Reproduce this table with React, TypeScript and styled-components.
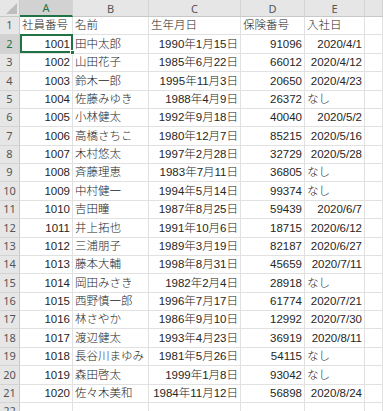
import React from "react";
import styled, { createGlobalStyle, css } from "styled-components";

const Global = createGlobalStyle`
  html, body { margin: 0; padding: 0; background: #ffffff; }
  body { overflow: hidden; }
`;

type Row = [string, string, string, string, string];

const rows: Row[] = [
  ["1001", "田中太郎", "1990年1月15日", "91096", "2020/4/1"],
  ["1002", "山田花子", "1985年6月22日", "66012", "2020/4/12"],
  ["1003", "鈴木一郎", "1995年11月3日", "20650", "2020/4/23"],
  ["1004", "佐藤みゆき", "1988年4月9日", "26372", "なし"],
  ["1005", "小林健太", "1992年9月18日", "40040", "2020/5/2"],
  ["1006", "高橋さちこ", "1980年12月7日", "85215", "2020/5/16"],
  ["1007", "木村悠太", "1997年2月28日", "32729", "2020/5/28"],
  ["1008", "斉藤理恵", "1983年7月11日", "36805", "なし"],
  ["1009", "中村健一", "1994年5月14日", "99374", "なし"],
  ["1010", "吉田瞳", "1987年8月25日", "59439", "2020/6/7"],
  ["1011", "井上拓也", "1991年10月6日", "18715", "2020/6/12"],
  ["1012", "三浦朋子", "1989年3月19日", "82187", "2020/6/27"],
  ["1013", "藤本大輔", "1998年8月31日", "45659", "2020/7/11"],
  ["1014", "岡田みさき", "1982年2月4日", "28918", "なし"],
  ["1015", "西野慎一郎", "1996年7月17日", "61774", "2020/7/21"],
  ["1016", "林さやか", "1986年9月10日", "12992", "2020/7/30"],
  ["1017", "渡辺健太", "1993年4月23日", "36919", "2020/8/11"],
  ["1018", "長谷川まゆみ", "1981年5月26日", "54115", "なし"],
  ["1019", "森田啓太", "1999年1月8日", "93042", "なし"],
  ["1020", "佐々木美和", "1984年11月12日", "56898", "2020/8/24"],
];

const header = ["社員番号", "名前", "生年月日", "保険番号", "入社日"];
const letters = ["A", "B", "C", "D", "E", ""];

const ROW_H = 18.38;

const Sheet = styled.div`
  display: grid;
  grid-template-columns: 20px 53px 76px 92px 64px 60px 1fr;
  grid-template-rows: 17px repeat(22, ${ROW_H}px);
  width: 383px;
  height: 411px;
  overflow: hidden;
  font-family: "Liberation Sans", "Noto Sans CJK JP", sans-serif;
  font-size: 11.5px;
  font-weight: 300;
  color: #262626;
  background: #ffffff;
`;

const Corner = styled.div`
  position: relative;
  background: #e6e6e6;
  border-right: 1px solid #c8c8c8;
  border-bottom: 1px solid #c8c8c8;
  &::after {
    content: "";
    position: absolute;
    right: 2px;
    bottom: 2px;
    width: 0;
    height: 0;
    border-left: 11px solid transparent;
    border-bottom: 11px solid #bdbdbd;
  }
`;

const ColHead = styled.div<{ $active?: boolean }>`
  display: flex;
  align-items: center;
  justify-content: center;
  box-sizing: border-box;
  background: #e6e6e6;
  border-right: 1px solid #d4d4d4;
  border-bottom: 1px solid #c8c8c8;
  color: #555555;
  font-family: "Noto Sans", "Liberation Sans", sans-serif;
  font-size: 11px;
  font-weight: 400;
  ${(p) =>
    p.$active &&
    css`
      background: #d2d2d2;
      color: #217346;
      border-bottom: 2px solid #217346;
    `}
`;

const RowHead = styled.div<{ $active?: boolean }>`
  display: flex;
  align-items: flex-end;
  justify-content: center;
  padding-bottom: 1px;
  box-sizing: border-box;
  background: #e6e6e6;
  border-right: 1px solid #c8c8c8;
  border-bottom: 1px solid #d4d4d4;
  color: #555555;
  font-family: "Noto Sans", "Liberation Sans", sans-serif;
  font-size: 11px;
  font-weight: 400;
  line-height: 16px;
  ${(p) =>
    p.$active &&
    css`
      background: #d2d2d2;
      color: #217346;
    `}
`;

const Cell = styled.div<{ $align?: "left" | "right"; $selected?: boolean }>`
  position: relative;
  display: flex;
  align-items: flex-end;
  justify-content: ${(p) => (p.$align === "right" ? "flex-end" : "flex-start")};
  padding: 0 2px 1px 2px;
  box-sizing: border-box;
  border-right: 1px solid #e1e1e1;
  border-bottom: 1px solid #e1e1e1;
  white-space: nowrap;
  min-width: 0;
  line-height: 16px;
  ${(p) =>
    p.$selected &&
    css`
      &::before {
        content: "";
        position: absolute;
        left: 0;
        top: -1px;
        right: -1px;
        bottom: 0;
        border: 2px solid #217346;
        pointer-events: none;
      }
      &::after {
        content: "";
        position: absolute;
        right: -3px;
        bottom: -2px;
        width: 5px;
        height: 5px;
        background: #217346;
        border: 1px solid #ffffff;
        box-sizing: border-box;
        z-index: 2;
      }
    `}
`;

const Text = styled.span`
  display: block;
`;

const isNumeric = (v: string) => /^[0-9/年月日]+$/.test(v) && /[0-9]/.test(v);

export default function App() {
  return (
    <>
      <Global />
      <Sheet>
        <Corner />
        {letters.map((l, i) => (
          <ColHead key={"h" + i} $active={i === 0}>
            {l}
          </ColHead>
        ))}

        <RowHead>1</RowHead>
        {header.map((h, i) => (
          <Cell key={"t" + i} $align="left">
            <Text>{h}</Text>
          </Cell>
        ))}
        <Cell />

        {rows.map((r, ri) => (
          <React.Fragment key={ri}>
            <RowHead $active={ri === 0}>{ri + 2}</RowHead>
            {r.map((v, ci) => (
              <Cell
                key={ci}
                $align={isNumeric(v) ? "right" : "left"}
                $selected={ri === 0 && ci === 0}
              >
                <Text>{v}</Text>
              </Cell>
            ))}
            <Cell />
          </React.Fragment>
        ))}

        <RowHead>22</RowHead>
        {[0, 1, 2, 3, 4, 5].map((i) => (
          <Cell key={"e" + i} />
        ))}
      </Sheet>
    </>
  );
}
